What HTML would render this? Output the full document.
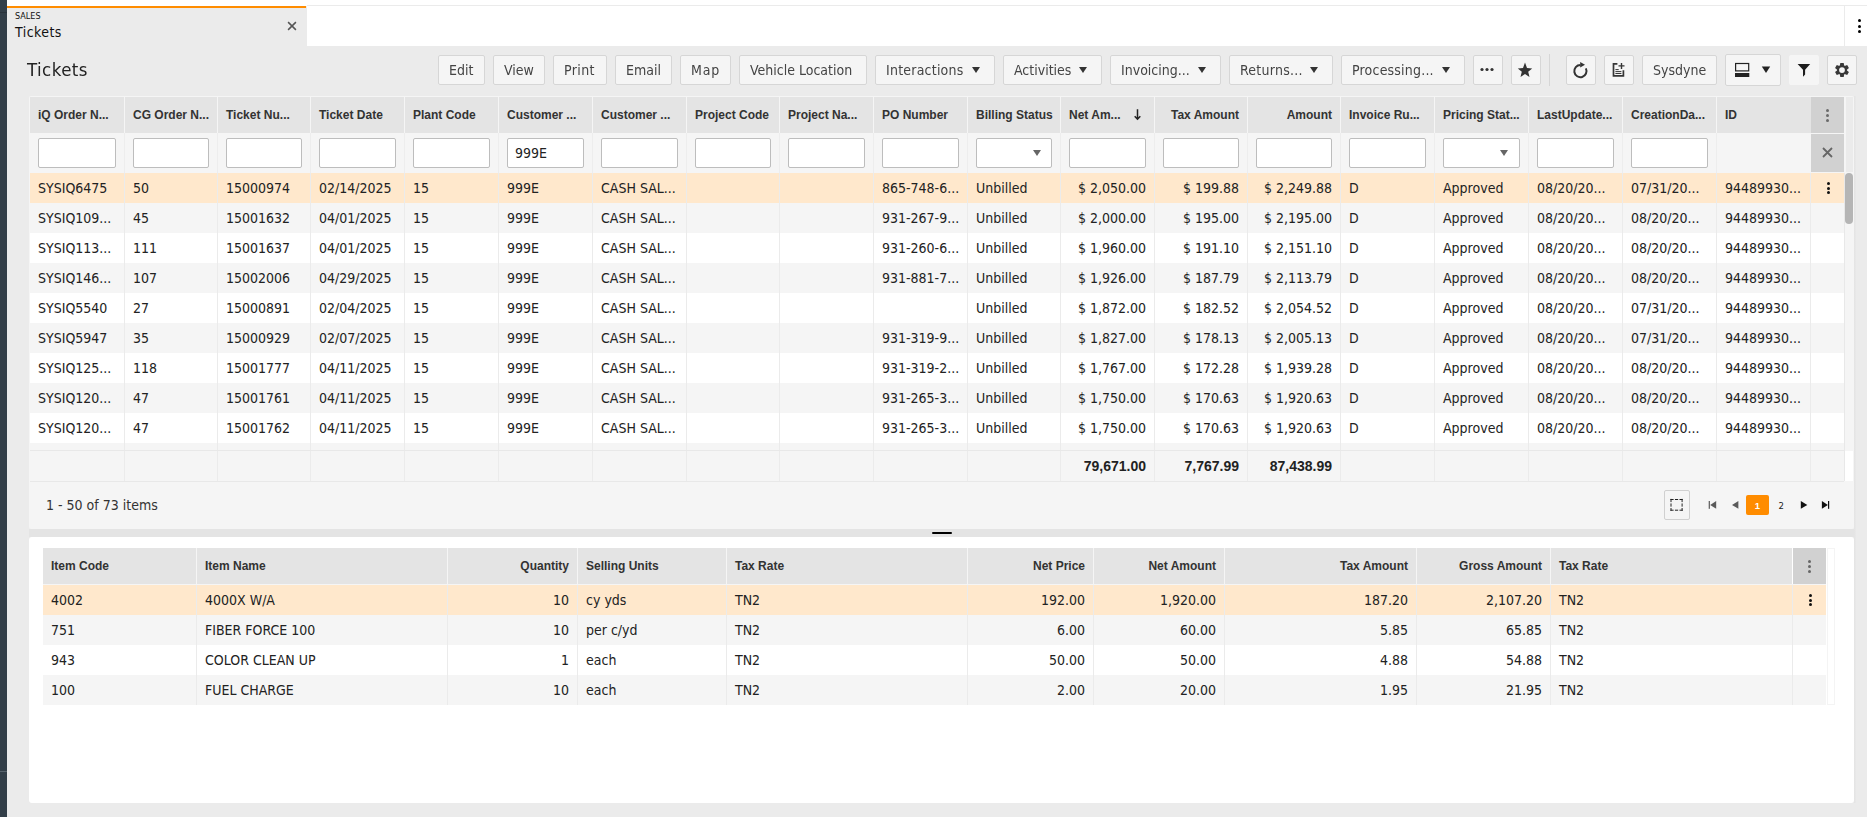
<!DOCTYPE html>
<html lang="en"><head><meta charset="utf-8"><title>Tickets</title>
<style>
html,body{margin:0;padding:0}
body{width:1867px;height:817px;overflow:hidden;position:relative;background:#ebebeb;font-family:"DejaVu Sans Condensed", "Liberation Sans", sans-serif;font-size:14px;color:#222}
.abs{position:absolute}
#side{left:0;top:0;width:7px;height:817px;background:#323e48}
#side i{position:absolute;left:0;width:7px;height:1px;background:#29333b}
#topbar{left:7px;top:0;width:1860px;height:46px;background:#fff}
#topline{left:307px;top:5px;width:1560px;height:1px;background:#ebebeb}
#tab{left:7px;top:6px;width:300px;height:40px;background:#ebebeb;box-sizing:border-box}
#tab b{position:absolute;left:0;top:0;width:299px;height:2px;background:#ff8c00}
#tab .s{position:absolute;left:8px;top:4px;font-size:9px;line-height:12px;color:#111;letter-spacing:0}
#tab .t{position:absolute;left:8px;top:16px;font-size:14px;line-height:20px;color:#111;letter-spacing:.45px}
#tabx{left:286px;top:20px;width:12px;height:12px}
#vline{left:1844px;top:6px;width:1px;height:40px;background:#ebebeb}
#h1{will-change:transform;left:27px;top:57px;font-size:18.5px;line-height:26px;color:#222;letter-spacing:.45px}
.btn{will-change:transform;position:absolute;top:55px;height:30px;box-sizing:border-box;border:1px solid #d6d6d6;border-radius:2px;background:#f5f5f5;color:#444;font-size:14px;line-height:28px;text-align:left;white-space:nowrap}
.btn span{position:absolute;top:0}
.btn svg{position:absolute}
.caret{position:absolute;top:10.7px;width:0;height:0;border-left:4.2px solid transparent;border-right:4.2px solid transparent;border-top:6.5px solid #333}
#sep{left:1549px;top:54px;width:1px;height:32px;background:#d6d6d6}
/* top grid */
#g1{left:29px;top:96px;width:1825px;height:433px;background:#f5f5f5;border-radius:2px}
#g1i{position:absolute;left:1px;top:1px;width:1824px;height:432px}
.row{position:absolute;left:0;height:30px;width:1814px;white-space:nowrap}
.c{position:absolute;top:0;height:100%;box-sizing:border-box;border-left:1px solid #ebebeb;padding:0 8px 0 8px;overflow:hidden;white-space:nowrap;line-height:30px}
.c.f{border-left:0;padding-left:8px}
.c.r{text-align:right}
.hd{background:#e4e4e4;height:36px}
.hd .c{font-family:"Liberation Sans", sans-serif;font-weight:bold;font-size:12px;line-height:36px;color:#333;border-left-color:#f5f5f5}
.fl .c{border-left-color:#ededed}
.inp{position:absolute;left:8px;right:8px;top:5px;height:30px;box-sizing:border-box;border:1px solid #bdbdbd;border-radius:2px;background:#fff;line-height:28px;font-size:14px;color:#222;padding-left:7px}
.c.f .inp{left:8px}
.sel{background:#ffe8cc}
.alt{background:#f5f5f5}
.wh{background:#fff}
.menuh{position:absolute;background:#d1d1d1}
.ft .c{font-family:"Liberation Sans", sans-serif;font-weight:bold;font-size:14px;color:#222}
.dots i{position:absolute;left:0;width:3px;height:3px;border-radius:50%;background:currentColor}
/* bottom grid */
#p2{left:29px;top:537px;width:1825px;height:266px;background:#fff;border-radius:3px}
#g2{left:43px;top:548px;width:1792px;height:157px;background:#fff}
</style></head><body>
<div id="side" class="abs"><i style="top:12px"></i><i style="top:771px;background:#58646d"></i></div>
<div id="topbar" class="abs"></div><div id="topline" class="abs"></div>
<div id="tab" class="abs"><b></b><div class="s">SALES</div><div class="t">Tickets</div></div>
<svg id="tabx" class="abs" viewBox="0 0 12 12"><path d="M2.1 2.1 L9.9 9.9 M9.9 2.1 L2.1 9.9" stroke="#555" stroke-width="1.5" fill="none"/></svg>
<div id="vline" class="abs"></div>
<div class="abs dots" style="left:1858px;top:19px;width:3px;height:15px;color:#000"><i style="top:0"></i><i style="top:5.5px"></i><i style="top:11px"></i></div>
<div id="h1" class="abs">Tickets</div>
<div class="btn" style="left:438px;width:47px;"><span style="left:10px">Edit</span></div>
<div class="btn" style="left:493px;width:52px;"><span style="left:10px">View</span></div>
<div class="btn" style="left:553px;width:54px;letter-spacing:.4px;"><span style="left:10px">Print</span></div>
<div class="btn" style="left:615px;width:57px;"><span style="left:10px">Email</span></div>
<div class="btn" style="left:680px;width:51px;letter-spacing:.8px;"><span style="left:10px">Map</span></div>
<div class="btn" style="left:739px;width:128px;"><span style="left:10px">Vehicle Location</span></div>
<div class="btn" style="left:875px;width:120px;letter-spacing:.22px;"><span style="left:10px">Interactions</span><i class="caret" style="left:96px"></i></div>
<div class="btn" style="left:1003px;width:99px;"><span style="left:10px">Activities</span><i class="caret" style="left:75px"></i></div>
<div class="btn" style="left:1110px;width:111px;"><span style="left:10px">Invoicing...</span><i class="caret" style="left:87px"></i></div>
<div class="btn" style="left:1229px;width:104px;letter-spacing:.25px;"><span style="left:10px">Returns...</span><i class="caret" style="left:80px"></i></div>
<div class="btn" style="left:1341px;width:124px;letter-spacing:.2px;"><span style="left:10px">Processing...</span><i class="caret" style="left:100px"></i></div>
<div class="btn" style="left:1473px;width:30px;"><svg style="left:0;top:0" width="28" height="28" viewBox="0 0 28 28"><circle cx="8" cy="13.5" r="1.6" fill="#333"/><circle cx="13" cy="13.5" r="1.6" fill="#333"/><circle cx="18" cy="13.5" r="1.6" fill="#333"/></svg></div>
<div class="btn" style="left:1511px;width:30px;"><svg style="left:5px;top:5.7px" width="16" height="16" viewBox="0 0 16 16"><path d="M8 0.5 L10 6 L15.2 6.4 L11.2 9.8 L12.5 14.9 L8 12.1 L3.5 14.9 L4.8 9.8 L0.8 6.4 L6 6 Z" fill="#333"/></svg></div>
<div id="sep" class="abs"></div>
<div class="btn" style="left:1566px;width:30px;"><svg style="left:0;top:0" width="28" height="28" viewBox="0 0 28 28"><path d="M13.4 9.00 A6.1 6.1 0 1 0 18.88 12.43" stroke="#333" stroke-width="2" fill="none"/><path d="M13.2 6 L18 8.8 L13.2 11.6 Z" fill="#333"/></svg></div>
<div class="btn" style="left:1604px;width:30px;"><svg style="left:0;top:0" width="28" height="28" viewBox="0 0 28 28"><path d="M12.4 7.9 H8.5 V19.8 H18.4 V14.2" stroke="#363636" stroke-width="1.7" fill="none"/><path d="M16.5 6.9 V12.9 M13.5 9.9 H19.5" stroke="#363636" stroke-width="1.4" fill="none"/><path d="M10.4 13.6 H13.7 M10.4 15.6 H16.4 M10.4 17.5 H16.4" stroke="#363636" stroke-width="1" fill="none"/></svg></div>
<div class="btn" style="left:1642px;width:75px;"><span style="left:10px">Sysdyne</span></div>
<div class="btn" style="left:1725px;width:56px;top:54px;height:32px;"><svg style="left:0;top:0" width="54" height="30" viewBox="0 0 54 30"><rect x="9.6" y="8.5" width="13.1" height="7.4" stroke="#222" stroke-width="1.2" fill="none"/><rect x="9" y="18" width="14.3" height="4" fill="#222"/><path d="M35.8 11.6 H44.2 L40 18 Z" fill="#222"/></svg></div>
<div class="btn" style="left:1789px;width:30px;border-color:#f5f5f5;"><svg style="left:0;top:0" width="28" height="28" viewBox="0 0 28 28"><path d="M7.6 7.9 H20.2 L15.1 13.8 V18.6 L13.3 20.4 H13 V13.8 Z" fill="#1c1c1c"/></svg></div>
<div class="btn" style="left:1827px;width:30px;"><svg style="left:0;top:0" width="28" height="28" viewBox="0 0 28 28"><g fill="#383838"><circle cx="14" cy="14.05" r="5"/><path d="M12.3 7.05 H15.7 L16.3 10.4 H11.7 Z" transform="rotate(0 14 14.05)"/><path d="M12.3 7.05 H15.7 L16.3 10.4 H11.7 Z" transform="rotate(60 14 14.05)"/><path d="M12.3 7.05 H15.7 L16.3 10.4 H11.7 Z" transform="rotate(120 14 14.05)"/><path d="M12.3 7.05 H15.7 L16.3 10.4 H11.7 Z" transform="rotate(180 14 14.05)"/><path d="M12.3 7.05 H15.7 L16.3 10.4 H11.7 Z" transform="rotate(240 14 14.05)"/><path d="M12.3 7.05 H15.7 L16.3 10.4 H11.7 Z" transform="rotate(300 14 14.05)"/></g><circle cx="14" cy="14.05" r="2.9" fill="#f5f5f5"/></svg></div>
<div id="g1" class="abs"><div id="g1i">
<div class="row hd" style="top:0;width:1781px"><div class="c f" style="left:0px;width:94px">iQ Order N...</div><div class="c" style="left:94px;width:93px">CG Order N...</div><div class="c" style="left:187px;width:93px">Ticket Nu...</div><div class="c" style="left:280px;width:94px">Ticket Date</div><div class="c" style="left:374px;width:94px">Plant Code</div><div class="c" style="left:468px;width:94px">Customer ...</div><div class="c" style="left:562px;width:94px">Customer ...</div><div class="c" style="left:656px;width:93px">Project Code</div><div class="c" style="left:749px;width:94px">Project Na...</div><div class="c" style="left:843px;width:94px">PO Number</div><div class="c" style="left:937px;width:93px">Billing Status</div><div class="c" style="left:1030px;width:94px">Net Am...<svg style="position:absolute;left:72.3px;top:11px" width="9" height="13" viewBox="0 0 9 13"><path d="M4.5 1.2 V11.2 M1.7 8.2 L4.5 11.2 L7.3 8.2" stroke="#222" stroke-width="1.5" fill="none"/></svg></div><div class="c r" style="left:1124px;width:93px">Tax Amount</div><div class="c r" style="left:1217px;width:93px">Amount</div><div class="c" style="left:1310px;width:94px">Invoice Ru...</div><div class="c" style="left:1404px;width:94px">Pricing Stat...</div><div class="c" style="left:1498px;width:94px">LastUpdate...</div><div class="c" style="left:1592px;width:94px">CreationDa...</div><div class="c" style="left:1686px;width:94px">ID</div></div>
<div class="menuh" style="left:1781px;top:0;width:33px;height:36px"></div><div class="menuh" style="left:1781px;top:37px;width:33px;height:38px"></div><div class="dots" style="position:absolute;left:1796px;top:12px;width:3px;height:13px;color:#6a6a6a"><i style="top:0"></i><i style="top:5px"></i><i style="top:10px"></i></div><svg style="position:absolute;left:1792px;top:50.3px" width="11" height="11" viewBox="0 0 11 11"><path d="M1 1 L10 10 M10 1 L1 10" stroke="#666" stroke-width="1.8" fill="none"/></svg>
<div class="row fl" style="top:36px;height:40px;width:1781px"><div class="c f" style="left:0px;width:94px"><div class="inp"></div></div><div class="c" style="left:94px;width:93px"><div class="inp"></div></div><div class="c" style="left:187px;width:93px"><div class="inp"></div></div><div class="c" style="left:280px;width:94px"><div class="inp"></div></div><div class="c" style="left:374px;width:94px"><div class="inp"></div></div><div class="c" style="left:468px;width:94px"><div class="inp">999E</div></div><div class="c" style="left:562px;width:94px"><div class="inp"></div></div><div class="c" style="left:656px;width:93px"><div class="inp"></div></div><div class="c" style="left:749px;width:94px"><div class="inp"></div></div><div class="c" style="left:843px;width:94px"><div class="inp"></div></div><div class="c" style="left:937px;width:93px"><div class="inp"><i class="caret" style="left:56px;top:11px;border-top-color:#666"></i></div></div><div class="c r" style="left:1030px;width:94px"><div class="inp"></div></div><div class="c r" style="left:1124px;width:93px"><div class="inp"></div></div><div class="c r" style="left:1217px;width:93px"><div class="inp"></div></div><div class="c" style="left:1310px;width:94px"><div class="inp"></div></div><div class="c" style="left:1404px;width:94px"><div class="inp"><i class="caret" style="left:56px;top:11px;border-top-color:#666"></i></div></div><div class="c" style="left:1498px;width:94px"><div class="inp"></div></div><div class="c" style="left:1592px;width:94px"><div class="inp"></div></div><div class="c" style="left:1686px;width:94px"></div></div>
<div class="row sel" style="top:76px"><div class="c f" style="left:0px;width:94px">SYSIQ6475</div><div class="c" style="left:94px;width:93px">50</div><div class="c" style="left:187px;width:93px">15000974</div><div class="c" style="left:280px;width:94px">02/14/2025</div><div class="c" style="left:374px;width:94px">15</div><div class="c" style="left:468px;width:94px">999E</div><div class="c" style="left:562px;width:94px">CASH SAL...</div><div class="c" style="left:656px;width:93px"></div><div class="c" style="left:749px;width:94px"></div><div class="c" style="left:843px;width:94px">865-748-6...</div><div class="c" style="left:937px;width:93px">Unbilled</div><div class="c r" style="left:1030px;width:94px">$ 2,050.00</div><div class="c r" style="left:1124px;width:93px">$ 199.88</div><div class="c r" style="left:1217px;width:93px">$ 2,249.88</div><div class="c" style="left:1310px;width:94px">D</div><div class="c" style="left:1404px;width:94px">Approved</div><div class="c" style="left:1498px;width:94px">08/20/20...</div><div class="c" style="left:1592px;width:94px">07/31/20...</div><div class="c" style="left:1686px;width:94px">94489930...</div><div class="c" style="left:1780px;width:34px"></div></div>
<div class="row alt" style="top:106px"><div class="c f" style="left:0px;width:94px">SYSIQ109...</div><div class="c" style="left:94px;width:93px">45</div><div class="c" style="left:187px;width:93px">15001632</div><div class="c" style="left:280px;width:94px">04/01/2025</div><div class="c" style="left:374px;width:94px">15</div><div class="c" style="left:468px;width:94px">999E</div><div class="c" style="left:562px;width:94px">CASH SAL...</div><div class="c" style="left:656px;width:93px"></div><div class="c" style="left:749px;width:94px"></div><div class="c" style="left:843px;width:94px">931-267-9...</div><div class="c" style="left:937px;width:93px">Unbilled</div><div class="c r" style="left:1030px;width:94px">$ 2,000.00</div><div class="c r" style="left:1124px;width:93px">$ 195.00</div><div class="c r" style="left:1217px;width:93px">$ 2,195.00</div><div class="c" style="left:1310px;width:94px">D</div><div class="c" style="left:1404px;width:94px">Approved</div><div class="c" style="left:1498px;width:94px">08/20/20...</div><div class="c" style="left:1592px;width:94px">08/20/20...</div><div class="c" style="left:1686px;width:94px">94489930...</div><div class="c" style="left:1780px;width:34px"></div></div>
<div class="row wh" style="top:136px"><div class="c f" style="left:0px;width:94px">SYSIQ113...</div><div class="c" style="left:94px;width:93px">111</div><div class="c" style="left:187px;width:93px">15001637</div><div class="c" style="left:280px;width:94px">04/01/2025</div><div class="c" style="left:374px;width:94px">15</div><div class="c" style="left:468px;width:94px">999E</div><div class="c" style="left:562px;width:94px">CASH SAL...</div><div class="c" style="left:656px;width:93px"></div><div class="c" style="left:749px;width:94px"></div><div class="c" style="left:843px;width:94px">931-260-6...</div><div class="c" style="left:937px;width:93px">Unbilled</div><div class="c r" style="left:1030px;width:94px">$ 1,960.00</div><div class="c r" style="left:1124px;width:93px">$ 191.10</div><div class="c r" style="left:1217px;width:93px">$ 2,151.10</div><div class="c" style="left:1310px;width:94px">D</div><div class="c" style="left:1404px;width:94px">Approved</div><div class="c" style="left:1498px;width:94px">08/20/20...</div><div class="c" style="left:1592px;width:94px">08/20/20...</div><div class="c" style="left:1686px;width:94px">94489930...</div><div class="c" style="left:1780px;width:34px"></div></div>
<div class="row alt" style="top:166px"><div class="c f" style="left:0px;width:94px">SYSIQ146...</div><div class="c" style="left:94px;width:93px">107</div><div class="c" style="left:187px;width:93px">15002006</div><div class="c" style="left:280px;width:94px">04/29/2025</div><div class="c" style="left:374px;width:94px">15</div><div class="c" style="left:468px;width:94px">999E</div><div class="c" style="left:562px;width:94px">CASH SAL...</div><div class="c" style="left:656px;width:93px"></div><div class="c" style="left:749px;width:94px"></div><div class="c" style="left:843px;width:94px">931-881-7...</div><div class="c" style="left:937px;width:93px">Unbilled</div><div class="c r" style="left:1030px;width:94px">$ 1,926.00</div><div class="c r" style="left:1124px;width:93px">$ 187.79</div><div class="c r" style="left:1217px;width:93px">$ 2,113.79</div><div class="c" style="left:1310px;width:94px">D</div><div class="c" style="left:1404px;width:94px">Approved</div><div class="c" style="left:1498px;width:94px">08/20/20...</div><div class="c" style="left:1592px;width:94px">08/20/20...</div><div class="c" style="left:1686px;width:94px">94489930...</div><div class="c" style="left:1780px;width:34px"></div></div>
<div class="row wh" style="top:196px"><div class="c f" style="left:0px;width:94px">SYSIQ5540</div><div class="c" style="left:94px;width:93px">27</div><div class="c" style="left:187px;width:93px">15000891</div><div class="c" style="left:280px;width:94px">02/04/2025</div><div class="c" style="left:374px;width:94px">15</div><div class="c" style="left:468px;width:94px">999E</div><div class="c" style="left:562px;width:94px">CASH SAL...</div><div class="c" style="left:656px;width:93px"></div><div class="c" style="left:749px;width:94px"></div><div class="c" style="left:843px;width:94px"></div><div class="c" style="left:937px;width:93px">Unbilled</div><div class="c r" style="left:1030px;width:94px">$ 1,872.00</div><div class="c r" style="left:1124px;width:93px">$ 182.52</div><div class="c r" style="left:1217px;width:93px">$ 2,054.52</div><div class="c" style="left:1310px;width:94px">D</div><div class="c" style="left:1404px;width:94px">Approved</div><div class="c" style="left:1498px;width:94px">08/20/20...</div><div class="c" style="left:1592px;width:94px">07/31/20...</div><div class="c" style="left:1686px;width:94px">94489930...</div><div class="c" style="left:1780px;width:34px"></div></div>
<div class="row alt" style="top:226px"><div class="c f" style="left:0px;width:94px">SYSIQ5947</div><div class="c" style="left:94px;width:93px">35</div><div class="c" style="left:187px;width:93px">15000929</div><div class="c" style="left:280px;width:94px">02/07/2025</div><div class="c" style="left:374px;width:94px">15</div><div class="c" style="left:468px;width:94px">999E</div><div class="c" style="left:562px;width:94px">CASH SAL...</div><div class="c" style="left:656px;width:93px"></div><div class="c" style="left:749px;width:94px"></div><div class="c" style="left:843px;width:94px">931-319-9...</div><div class="c" style="left:937px;width:93px">Unbilled</div><div class="c r" style="left:1030px;width:94px">$ 1,827.00</div><div class="c r" style="left:1124px;width:93px">$ 178.13</div><div class="c r" style="left:1217px;width:93px">$ 2,005.13</div><div class="c" style="left:1310px;width:94px">D</div><div class="c" style="left:1404px;width:94px">Approved</div><div class="c" style="left:1498px;width:94px">08/20/20...</div><div class="c" style="left:1592px;width:94px">07/31/20...</div><div class="c" style="left:1686px;width:94px">94489930...</div><div class="c" style="left:1780px;width:34px"></div></div>
<div class="row wh" style="top:256px"><div class="c f" style="left:0px;width:94px">SYSIQ125...</div><div class="c" style="left:94px;width:93px">118</div><div class="c" style="left:187px;width:93px">15001777</div><div class="c" style="left:280px;width:94px">04/11/2025</div><div class="c" style="left:374px;width:94px">15</div><div class="c" style="left:468px;width:94px">999E</div><div class="c" style="left:562px;width:94px">CASH SAL...</div><div class="c" style="left:656px;width:93px"></div><div class="c" style="left:749px;width:94px"></div><div class="c" style="left:843px;width:94px">931-319-2...</div><div class="c" style="left:937px;width:93px">Unbilled</div><div class="c r" style="left:1030px;width:94px">$ 1,767.00</div><div class="c r" style="left:1124px;width:93px">$ 172.28</div><div class="c r" style="left:1217px;width:93px">$ 1,939.28</div><div class="c" style="left:1310px;width:94px">D</div><div class="c" style="left:1404px;width:94px">Approved</div><div class="c" style="left:1498px;width:94px">08/20/20...</div><div class="c" style="left:1592px;width:94px">08/20/20...</div><div class="c" style="left:1686px;width:94px">94489930...</div><div class="c" style="left:1780px;width:34px"></div></div>
<div class="row alt" style="top:286px"><div class="c f" style="left:0px;width:94px">SYSIQ120...</div><div class="c" style="left:94px;width:93px">47</div><div class="c" style="left:187px;width:93px">15001761</div><div class="c" style="left:280px;width:94px">04/11/2025</div><div class="c" style="left:374px;width:94px">15</div><div class="c" style="left:468px;width:94px">999E</div><div class="c" style="left:562px;width:94px">CASH SAL...</div><div class="c" style="left:656px;width:93px"></div><div class="c" style="left:749px;width:94px"></div><div class="c" style="left:843px;width:94px">931-265-3...</div><div class="c" style="left:937px;width:93px">Unbilled</div><div class="c r" style="left:1030px;width:94px">$ 1,750.00</div><div class="c r" style="left:1124px;width:93px">$ 170.63</div><div class="c r" style="left:1217px;width:93px">$ 1,920.63</div><div class="c" style="left:1310px;width:94px">D</div><div class="c" style="left:1404px;width:94px">Approved</div><div class="c" style="left:1498px;width:94px">08/20/20...</div><div class="c" style="left:1592px;width:94px">08/20/20...</div><div class="c" style="left:1686px;width:94px">94489930...</div><div class="c" style="left:1780px;width:34px"></div></div>
<div class="row wh" style="top:316px"><div class="c f" style="left:0px;width:94px">SYSIQ120...</div><div class="c" style="left:94px;width:93px">47</div><div class="c" style="left:187px;width:93px">15001762</div><div class="c" style="left:280px;width:94px">04/11/2025</div><div class="c" style="left:374px;width:94px">15</div><div class="c" style="left:468px;width:94px">999E</div><div class="c" style="left:562px;width:94px">CASH SAL...</div><div class="c" style="left:656px;width:93px"></div><div class="c" style="left:749px;width:94px"></div><div class="c" style="left:843px;width:94px">931-265-3...</div><div class="c" style="left:937px;width:93px">Unbilled</div><div class="c r" style="left:1030px;width:94px">$ 1,750.00</div><div class="c r" style="left:1124px;width:93px">$ 170.63</div><div class="c r" style="left:1217px;width:93px">$ 1,920.63</div><div class="c" style="left:1310px;width:94px">D</div><div class="c" style="left:1404px;width:94px">Approved</div><div class="c" style="left:1498px;width:94px">08/20/20...</div><div class="c" style="left:1592px;width:94px">08/20/20...</div><div class="c" style="left:1686px;width:94px">94489930...</div><div class="c" style="left:1780px;width:34px"></div></div>
<div class="dots" style="position:absolute;left:1797px;top:85px;width:3px;height:13px;color:#111"><i style="top:0"></i><i style="top:4.5px"></i><i style="top:9px"></i></div><div class="row" style="top:346px;height:7px"><div class="c f" style="left:0px;width:94px"></div><div class="c" style="left:94px;width:93px"></div><div class="c" style="left:187px;width:93px"></div><div class="c" style="left:280px;width:94px"></div><div class="c" style="left:374px;width:94px"></div><div class="c" style="left:468px;width:94px"></div><div class="c" style="left:562px;width:94px"></div><div class="c" style="left:656px;width:93px"></div><div class="c" style="left:749px;width:94px"></div><div class="c" style="left:843px;width:94px"></div><div class="c" style="left:937px;width:93px"></div><div class="c r" style="left:1030px;width:94px"></div><div class="c r" style="left:1124px;width:93px"></div><div class="c r" style="left:1217px;width:93px"></div><div class="c" style="left:1310px;width:94px"></div><div class="c" style="left:1404px;width:94px"></div><div class="c" style="left:1498px;width:94px"></div><div class="c" style="left:1592px;width:94px"></div><div class="c" style="left:1686px;width:94px"></div><div class="c" style="left:1780px;width:34px"></div></div>
<div class="row ft" style="top:353px;height:32px;border-top:1px solid #e8e8e8;border-bottom:1px solid #e8e8e8;box-sizing:border-box"><div class="c f" style="left:0px;width:94px"></div><div class="c" style="left:94px;width:93px"></div><div class="c" style="left:187px;width:93px"></div><div class="c" style="left:280px;width:94px"></div><div class="c" style="left:374px;width:94px"></div><div class="c" style="left:468px;width:94px"></div><div class="c" style="left:562px;width:94px"></div><div class="c" style="left:656px;width:93px"></div><div class="c" style="left:749px;width:94px"></div><div class="c" style="left:843px;width:94px"></div><div class="c" style="left:937px;width:93px"></div><div class="c r" style="left:1030px;width:94px">79,671.00</div><div class="c r" style="left:1124px;width:93px">7,767.99</div><div class="c r" style="left:1217px;width:93px">87,438.99</div><div class="c" style="left:1310px;width:94px"></div><div class="c" style="left:1404px;width:94px"></div><div class="c" style="left:1498px;width:94px"></div><div class="c" style="left:1592px;width:94px"></div><div class="c" style="left:1686px;width:94px"></div><div class="c" style="left:1780px;width:34px"></div></div>
<div style="position:absolute;left:1815px;top:354px;width:8px;height:30px;background:#fff"></div><div style="position:absolute;left:1814px;top:76px;width:1px;height:308px;background:#e8e8e8"></div><div style="position:absolute;left:1816px;top:0;width:7px;height:75px;background:#ebebeb"></div><div style="position:absolute;left:1815px;top:76px;width:8px;height:51px;border-radius:4px;background:#b5b5b5"></div>
<div style="position:absolute;left:16px;top:384px;line-height:48px;font-size:14px;color:#333">1 - 50 of 73 items</div>
<div style="position:absolute;left:1634px;top:393px;width:26px;height:30px;box-sizing:border-box;border:1px solid #d0d0d0;border-radius:2px;background:#f5f5f5"><svg style="position:absolute;left:0;top:0" width="24" height="28" viewBox="0 0 24 28"><path d="M5.4 8.5 H17.7 M5.4 19.2 H17.7 M6 7.9 V19.8 M17.1 7.9 V19.8" fill="none" stroke="#222" stroke-width="1" stroke-dasharray="3.2 1.35"/></svg></div><svg style="position:absolute;left:1670px;top:400px" width="140" height="16" viewBox="1670 400 140 16"><rect x="1678.7" y="404" width="1.2" height="7.8" fill="#5a5a5a"/><path d="M1686.2 404 L1680.2 407.9 L1686.2 411.8 Z" fill="#5a5a5a"/><path d="M1708.4 404 L1702 407.9 L1708.4 411.8 Z" fill="#5a5a5a"/><path d="M1770.8 404 L1777.3 407.9 L1770.8 411.8 Z" fill="#111"/><path d="M1791.9 404 L1797.9 407.9 L1791.9 411.8 Z" fill="#111"/><rect x="1798" y="404" width="1.2" height="7.8" fill="#111"/></svg><div style="position:absolute;left:1716px;top:398px;width:23px;height:20px;background:#ff8c00;border-radius:2px;color:#fff;font-family:'Liberation Sans', sans-serif;font-weight:bold;font-size:9.5px;line-height:21.4px;text-align:center">1</div><div style="position:absolute;left:1739.7px;top:398px;width:23px;height:20px;color:#222;font-size:9.5px;line-height:21.4px;text-align:center">2</div>
</div></div>
<div class="abs" style="left:1854px;top:96px;width:2px;height:707px;background:linear-gradient(90deg,#e3e3e3,#e9e9e9)"></div><div class="abs" style="left:29px;top:529px;width:1825px;height:8px;background:#e4e4e4"></div><div class="abs" style="left:932px;top:532px;width:20px;height:2px;background:#000;border-radius:1px"></div>
<div id="p2" class="abs"></div>
<div id="g2" class="abs">
<div style="position:absolute;left:0;top:36px;width:1783px;height:1px;background:#f5f5f5"></div><div class="row hd" style="top:0;height:36px;width:1749px"><div class="c f" style="left:0px;width:153px">Item Code</div><div class="c" style="left:153px;width:251px">Item Name</div><div class="c r" style="left:404px;width:130px">Quantity</div><div class="c" style="left:534px;width:149px">Selling Units</div><div class="c" style="left:683px;width:241px">Tax Rate</div><div class="c r" style="left:924px;width:126px">Net Price</div><div class="c r" style="left:1050px;width:131px">Net Amount</div><div class="c r" style="left:1181px;width:192px">Tax Amount</div><div class="c r" style="left:1373px;width:134px">Gross Amount</div><div class="c" style="left:1507px;width:242px">Tax Rate</div></div>
<div class="menuh" style="left:1750px;top:0;width:33px;height:36px"></div><div class="dots" style="position:absolute;left:1765px;top:12px;width:3px;height:13px;color:#666"><i style="top:0"></i><i style="top:5px"></i><i style="top:10px"></i></div><div class="row sel" style="top:37px;width:1783px"><div class="c f" style="left:0px;width:153px">4002</div><div class="c" style="left:153px;width:251px">4000X W/A</div><div class="c r" style="left:404px;width:130px">10</div><div class="c" style="left:534px;width:149px">cy yds</div><div class="c" style="left:683px;width:241px">TN2</div><div class="c r" style="left:924px;width:126px">192.00</div><div class="c r" style="left:1050px;width:131px">1,920.00</div><div class="c r" style="left:1181px;width:192px">187.20</div><div class="c r" style="left:1373px;width:134px">2,107.20</div><div class="c" style="left:1507px;width:242px">TN2</div><div class="c" style="left:1749px;width:34px"></div></div>
<div class="row alt" style="top:67px;width:1783px"><div class="c f" style="left:0px;width:153px">751</div><div class="c" style="left:153px;width:251px">FIBER FORCE 100</div><div class="c r" style="left:404px;width:130px">10</div><div class="c" style="left:534px;width:149px">per c/yd</div><div class="c" style="left:683px;width:241px">TN2</div><div class="c r" style="left:924px;width:126px">6.00</div><div class="c r" style="left:1050px;width:131px">60.00</div><div class="c r" style="left:1181px;width:192px">5.85</div><div class="c r" style="left:1373px;width:134px">65.85</div><div class="c" style="left:1507px;width:242px">TN2</div><div class="c" style="left:1749px;width:34px"></div></div>
<div class="row wh" style="top:97px;width:1783px"><div class="c f" style="left:0px;width:153px">943</div><div class="c" style="left:153px;width:251px">COLOR CLEAN UP</div><div class="c r" style="left:404px;width:130px">1</div><div class="c" style="left:534px;width:149px">each</div><div class="c" style="left:683px;width:241px">TN2</div><div class="c r" style="left:924px;width:126px">50.00</div><div class="c r" style="left:1050px;width:131px">50.00</div><div class="c r" style="left:1181px;width:192px">4.88</div><div class="c r" style="left:1373px;width:134px">54.88</div><div class="c" style="left:1507px;width:242px">TN2</div><div class="c" style="left:1749px;width:34px"></div></div>
<div class="row alt" style="top:127px;width:1783px"><div class="c f" style="left:0px;width:153px">100</div><div class="c" style="left:153px;width:251px">FUEL CHARGE</div><div class="c r" style="left:404px;width:130px">10</div><div class="c" style="left:534px;width:149px">each</div><div class="c" style="left:683px;width:241px">TN2</div><div class="c r" style="left:924px;width:126px">2.00</div><div class="c r" style="left:1050px;width:131px">20.00</div><div class="c r" style="left:1181px;width:192px">1.95</div><div class="c r" style="left:1373px;width:134px">21.95</div><div class="c" style="left:1507px;width:242px">TN2</div><div class="c" style="left:1749px;width:34px"></div></div>
<div class="dots" style="position:absolute;left:1766px;top:46px;width:3px;height:13px;color:#111"><i style="top:0"></i><i style="top:4.5px"></i><i style="top:9px"></i></div><div style="position:absolute;left:1784px;top:0;width:8px;height:157px;box-sizing:border-box;border:1px solid #f4f4f4"></div></div>
</body></html>
